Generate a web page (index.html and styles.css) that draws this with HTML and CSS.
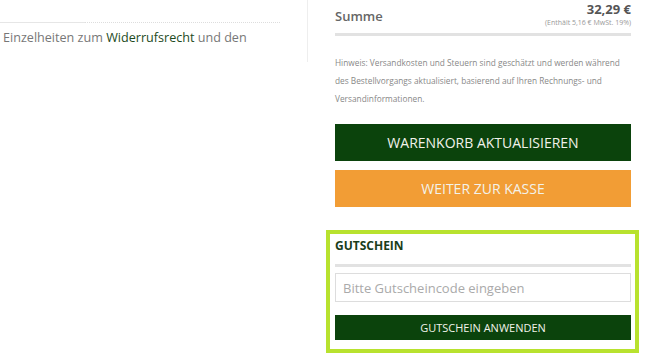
FILE: index.html
```html
<!DOCTYPE html>
<html lang="de">
  <head>
    <meta charset="UTF-8" />
    <meta name="viewport" content="width=device-width, initial-scale=1.0" />
    <title>Warenkorb</title>
    <link rel="stylesheet" href="styles.css">
  </head>
  <body>
    <div class="page">
      <div class="left">
        <div class="divider"></div>
        <p class="terms">Einzelheiten zum <a href="#">Widerrufsrecht</a> und den</p>
      </div>

      <div class="right">
        <div class="total-row">
          <span class="total-label">Summe</span>
          <div class="total-value">
            <strong>32,29 €</strong>
            <small>(Enthält 5,16 € MwSt. 19%)</small>
          </div>
        </div>

        <p class="note">
          Hinweis: Versandkosten und Steuern sind geschätzt und werden während
          des Bestellvorgangs aktualisiert, basierend auf Ihren Rechnungs- und
          Versandinformationen.
        </p>

        <button class="btn btn-green">Warenkorb aktualisieren</button>
        <button class="btn btn-orange">Weiter zur Kasse</button>

        <div class="coupon">
          <div class="coupon-title">Gutschein</div>
          <input class="coupon-input" placeholder="Bitte Gutscheincode eingeben" />
          <button class="btn btn-small">Gutschein anwenden</button>
        </div>
      </div>
    </div>
  </body>
</html>
```

FILE: styles.css
```css
* {
  box-sizing: border-box;
}
html,
body {
  margin: 0;
  padding: 0;
}
body {
  font-family: "Open Sans", "Liberation Sans", sans-serif;
  color: #777;
  background: #fff;
}
p {
  margin: 0;
}

.page {
  display: flex;
  align-items: flex-start;
}

.left {
  width: 308px;
  height: 62px;
  padding-top: 22px;
  border-right: 1px solid #eee;
}
.divider {
  width: 280px;
  border-top: 1px dotted #ddd;
  position: relative;
}
.divider::before {
  content: "";
  position: absolute;
  left: 0;
  top: -1px;
  width: 85px;
  border-top: 1px solid #e6e6e6;
}
.terms {
  padding: 5px 0 0 3px;
  font-size: 12.6px;
  line-height: 20px;
  color: #777;
}
.terms a {
  color: #1d4a1d;
  text-decoration: none;
}

.right {
  width: 296px;
  margin-left: 27px;
}

.total-row {
  display: flex;
  justify-content: space-between;
  align-items: center;
  height: 36px;
  padding-bottom: 3px;
  border-bottom: 3px solid #e2e2e2;
}
.total-label {
  font-size: 13px;
  font-weight: 600;
  color: #666;
  margin-top: 2px;
}
.total-value {
  display: flex;
  flex-direction: column;
  align-items: flex-end;
  margin-top: -2px;
}
.total-value strong {
  font-size: 13px;
  font-weight: 700;
  color: #555;
  line-height: 16px;
}
.total-value small {
  font-size: 7px;
  color: #999;
  line-height: 11px;
}

.note {
  margin-top: 18px;
  font-size: 8.3px;
  line-height: 18px;
  color: #888;
}

.btn {
  display: block;
  width: 100%;
  border: none;
  font-family: "Open Sans", "Liberation Sans", sans-serif;
  text-transform: uppercase;
  color: #f2f2ea;
  cursor: pointer;
}
.btn-green {
  height: 37px;
  margin-top: 16px;
  font-size: 14px;
  background: #0b430c;
}
.btn-orange {
  height: 37px;
  margin-top: 9px;
  font-size: 14px;
  background: #f29d35;
}

.coupon {
  margin: 23px -8px 0 -9px;
  border: 4px solid #b8e22e;
  padding: 4px 4px 9px 5px;
}
.coupon-title {
  font-size: 12px;
  font-weight: 700;
  text-transform: uppercase;
  color: #1a3d1a;
  line-height: 16px;
  padding-bottom: 10px;
  border-bottom: 3px solid #e2e2e2;
}
.coupon-input {
  display: block;
  width: 100%;
  height: 29px;
  margin-top: 6px;
  padding: 0 7px;
  border: 1px solid #ddd;
  font-family: "Open Sans", "Liberation Sans", sans-serif;
  font-size: 13px;
  color: #555;
}
.coupon-input::placeholder {
  color: #aaa;
}
.btn-small {
  height: 25px;
  margin-top: 13px;
  font-size: 11px;
  background: #0b430c;
}
```
